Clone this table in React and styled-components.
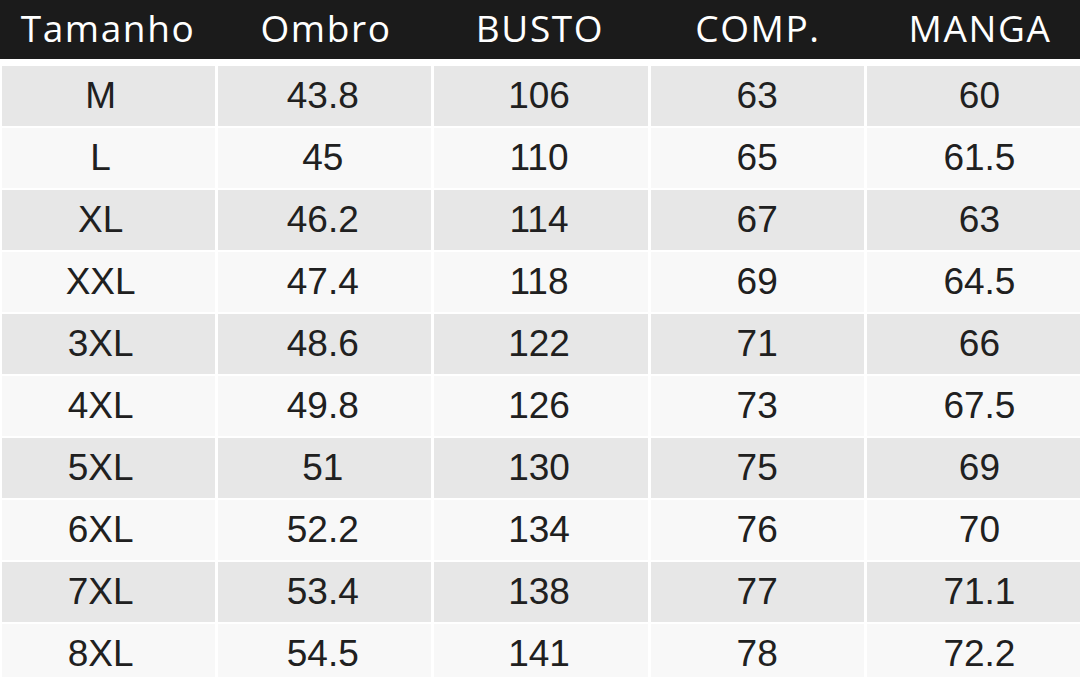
import React from "react";
import styled, { createGlobalStyle } from "styled-components";

const GlobalStyle = createGlobalStyle`
  html, body {
    margin: 0;
    padding: 0;
    background: #ffffff;
  }
`;

const columns = ["Tamanho", "Ombro", "BUSTO", "COMP.", "MANGA"];

// small nudge per column, the source chart is not perfectly centred
const shift = [-8, -2, -2, 0, 6];
const headShift = [0, 2, 0, 2, 8];

const rows = [
  ["M", "43.8", "106", "63", "60"],
  ["L", "45", "110", "65", "61.5"],
  ["XL", "46.2", "114", "67", "63"],
  ["XXL", "47.4", "118", "69", "64.5"],
  ["3XL", "48.6", "122", "71", "66"],
  ["4XL", "49.8", "126", "73", "67.5"],
  ["5XL", "51", "130", "75", "69"],
  ["6XL", "52.2", "134", "76", "70"],
  ["7XL", "53.4", "138", "77", "71.1"],
  ["8XL", "54.5", "141", "78", "72.2"],
];

const App = () => {
  return (
    <Page>
      <GlobalStyle />
      <Header>
        {columns.map((c, j) => (
          <HeadCell key={c} $shift={headShift[j]}>
            {c}
          </HeadCell>
        ))}
      </Header>
      <Body>
        {rows.map((row, i) => (
          <Row key={row[0]}>
            {row.map((v, j) => (
              <Cell key={j} $shaded={i % 2 === 0} $shift={shift[j]}>
                {v}
              </Cell>
            ))}
          </Row>
        ))}
      </Body>
    </Page>
  );
};

export default App;

const Page = styled.div`
  width: 1080px;
  height: 677px;
  overflow: hidden;
  background: #ffffff;
`;

const Header = styled.div`
  height: 59px;
  background: #1b1b1b;
  display: grid;
  grid-template-columns: repeat(5, 1fr);
  align-items: center;
`;

const HeadCell = styled.div`
  text-align: center;
  color: #ffffff;
  font-family: "Open Sans", "DejaVu Sans", sans-serif;
  font-weight: 400;
  font-size: 37px;
  letter-spacing: 1.6px;
  line-height: 1;
  padding-bottom: 4px;
  padding-left: ${(p) => (p.$shift > 0 ? p.$shift * 2 : 0)}px;
  padding-right: ${(p) => (p.$shift < 0 ? -p.$shift * 2 : 0)}px;
`;

const Body = styled.div`
  display: flex;
  flex-direction: column;
  gap: 2px;
  padding: 7px 0 0 2px;
`;

const Row = styled.div`
  display: grid;
  grid-template-columns: repeat(5, 1fr);
  column-gap: 3px;
`;

const Cell = styled.div`
  height: 60px;
  display: flex;
  align-items: center;
  justify-content: center;
  padding-left: ${(p) => (p.$shift > 0 ? p.$shift * 2 : 0)}px;
  padding-right: ${(p) => (p.$shift < 0 ? -p.$shift * 2 : 0)}px;
  background: ${(p) => (p.$shaded ? "#e7e7e7" : "#f8f8f8")};
  color: #202020;
  font-family: "Liberation Sans", Arial, sans-serif;
  font-size: 37px;
`;
